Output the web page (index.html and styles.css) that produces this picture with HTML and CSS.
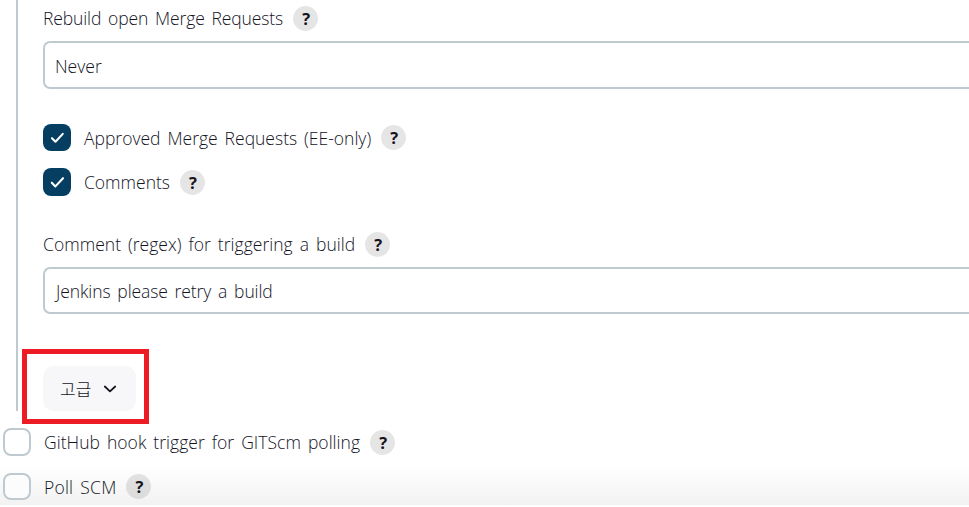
FILE: index.html
```html
<!DOCTYPE html>
<html lang="ko">
<head>
<meta charset="utf-8">
<title>Build Triggers</title>
<link rel="stylesheet" href="styles.css">
</head>
<body>
<main class="page">
  <section class="nested">
    <div class="label label-rebuild"><span class="text t-rebuild">Rebuild open Merge Requests</span><span class="help">?</span></div>
    <div class="field field-select"><span class="text t-never">Never</span></div>
    <div class="check-row row-approved">
      <span class="box checked"><svg viewBox="0 0 28 28"><path d="M8.8 14.7l3.6 3.7 7.6-8.2"/></svg></span>
      <span class="text t-approved">Approved Merge Requests (EE-only)</span><span class="help">?</span>
    </div>
    <div class="check-row row-comments">
      <span class="box checked"><svg viewBox="0 0 28 28"><path d="M8.8 14.7l3.6 3.7 7.6-8.2"/></svg></span>
      <span class="text t-comments">Comments</span><span class="help">?</span>
    </div>
    <div class="label label-regex"><span class="text t-regex">Comment (regex) for triggering a build</span><span class="help">?</span></div>
    <div class="field field-input"><span class="text t-retry">Jenkins please retry a build</span></div>
    <div class="advanced">
      <span class="advanced-text">고급</span>
      <svg class="chevron" viewBox="0 0 14 8"><path d="M1.8 1.5L7 6.3l5.2-4.8"/></svg>
      <span class="highlight"></span>
    </div>
  </section>
  <div class="check-row row-github">
    <span class="box"></span><span class="text t-github">GitHub hook trigger for GITScm polling</span><span class="help">?</span>
  </div>
  <div class="check-row row-poll">
    <span class="box"></span><span class="text t-poll">Poll SCM</span><span class="help">?</span>
  </div>
</main>
</body>
</html>
```
FILE: styles.css
```css
* { box-sizing: border-box; }

body {
  margin: 0;
  background: #fff;
  color: #14141f;
  font: 300 17.5px/24px "Open Sans", "Noto Sans CJK KR", sans-serif;
  overflow: hidden;
}

.page {
  height: 505px;
  overflow: hidden;
  background: linear-gradient(#fff 465px, #f2f2f2 505px);
}

.nested {
  height: 411px;
  margin-left: 16px;
  padding: 6px 0 0 25px;
  border-left: 2px solid #bfcad0;
}

.label, .check-row { display: flex; align-items: center; }
.label { height: 25px; }
.label .text { padding-bottom: 2px; }
.label-regex { margin-top: 36px; }
.text { white-space: nowrap; word-spacing: 2.4px; }
.t-rebuild { letter-spacing: -0.12px; }
.t-approved { letter-spacing: 0; }
.t-regex { letter-spacing: 0.025px; }
.t-retry { padding-left: 1px; letter-spacing: -0.1px; }
.t-github { letter-spacing: 0.03px; }
.t-poll { letter-spacing: 0.2px; }

.help {
  width: 25px;
  height: 25px;
  margin-left: 10px;
  padding-left: 1px;
  border-radius: 50%;
  background: rgba(0, 0, 0, 0.1);
  font: 700 16.5px/25px "Open Sans", sans-serif;
  text-align: center;
}

.field {
  display: flex;
  align-items: center;
  padding: 2px 0 0 10px;
  border: 2px solid #bfcad0;
  border-right: 0;
  border-radius: 7px 0 0 7px;
  background: #fff;
}
.field-select { height: 48px; margin-top: 10px; }
.field-input { height: 47px; margin-top: 10px; padding-top: 0; }

.check-row { height: 28px; }
.row-approved { height: 27px; margin-top: 35px; }
.row-comments { margin-top: 17px; }
.row-github { margin: 17px 0 0 3px; }
.row-poll { height: 27px; margin: 17px 0 0 3px; }

.box {
  flex: none;
  width: 28px;
  height: 28px;
  margin-right: 13px;
  border: 2px solid #bfcad0;
  border-radius: 8px;
  background: #fff;
}
.row-poll .box { background: #fcfcfc; }
.box.checked { border: 0; background: #063e61; }
.row-approved .box, .row-poll .box { height: 27px; }
.box svg { display: block; width: 100%; height: 100%; }
.box path {
  fill: none;
  stroke: #fff;
  stroke-width: 2.1;
  stroke-linecap: round;
  stroke-linejoin: round;
}

.advanced {
  position: relative;
  display: flex;
  align-items: center;
  width: 93px;
  height: 45px;
  margin-top: 52px;
  padding-left: 17px;
  border-radius: 11px;
  background: #f7f7fa;
}
.advanced-text { width: 33px; font: 300 17px/24px "Noto Sans CJK KR", sans-serif; }
.chevron { width: 14px; height: 8px; margin-left: 10px; }
.chevron path {
  fill: none;
  stroke: #14141f;
  stroke-width: 1.8;
  stroke-linecap: round;
  stroke-linejoin: round;
}
.highlight {
  position: absolute;
  top: -17px;
  left: -21px;
  width: 127px;
  height: 75px;
  border: 5px solid #ed1c24;
}
```
